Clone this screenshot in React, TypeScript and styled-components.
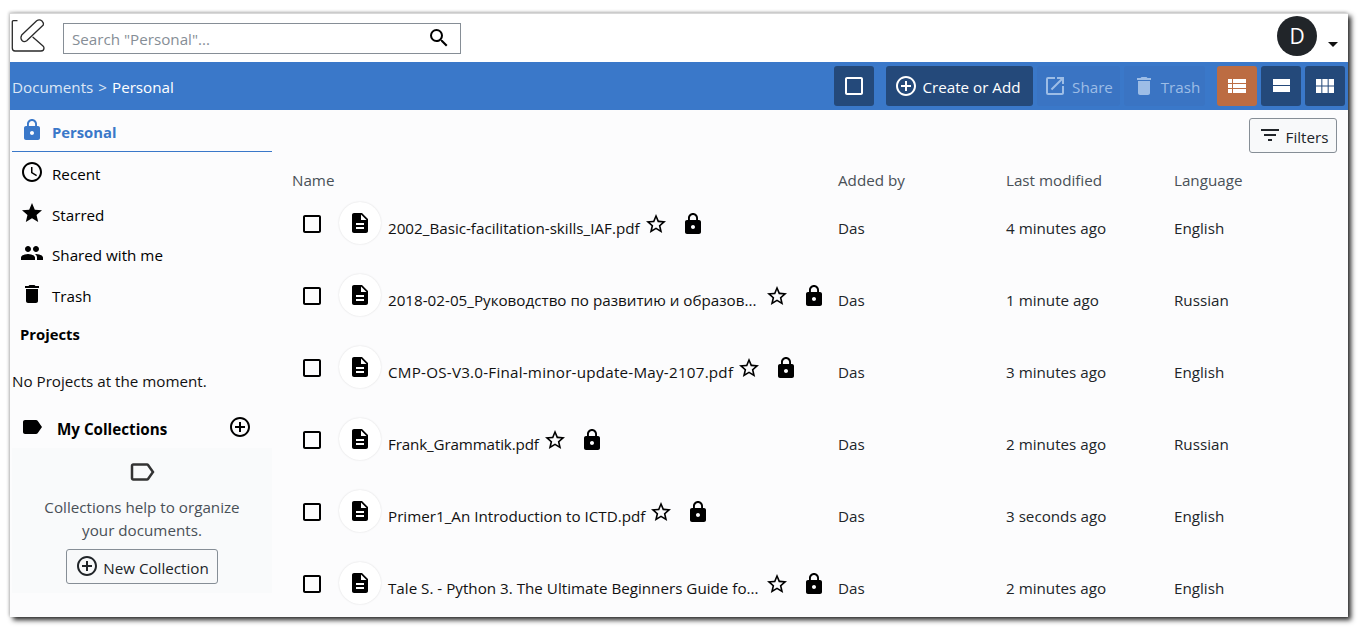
import styled, { createGlobalStyle } from "styled-components";
import {
  MdAccessTime,
  MdAddCircleOutline,
  MdCheckBoxOutlineBlank,
  MdDelete,
  MdDescription,
  MdFilterList,
  MdLabel,
  MdLabelOutline,
  MdLock,
  MdOpenInNew,
  MdPeople,
  MdSearch,
  MdStar,
  MdStarBorder,
  MdViewList,
  MdViewModule,
} from "react-icons/md";

const GlobalStyle = createGlobalStyle`
  html {
    overflow: hidden;
    background: #fff;
  }
  body {
    margin: 0;
    padding: 0;
    font-family: "Open Sans", "Noto Sans", sans-serif;
    font-size: 15.2px;
    color: #212529;
  }
`;

const Page = styled.div`
  padding: 13px 0 11px 10px;
  width: 1338px;
`;

const Window = styled.div`
  width: 1338px;
  height: 604px;
  background: #fcfcfd;
  border-top: 1px solid #d8d8d8;
  box-sizing: border-box;
  box-shadow: 3px 3px 5px rgba(0, 0, 0, 0.85), -1px -1px 3px rgba(0, 0, 0, 0.22);
  overflow: hidden;
`;

const TopBar = styled.header`
  height: 48px;
  background: #fff;
  display: flex;
  align-items: center;
  padding-left: 1px;
`;

const Logo = styled.svg`
  width: 34px;
  height: 36px;
  flex: none;
  align-self: flex-start;
  margin-top: 4px;
`;

const SearchBox = styled.div`
  width: 398px;
  height: 31px;
  margin-left: 18px;
  border: 1px solid #868e96;
  box-sizing: border-box;
  display: flex;
  align-items: center;
  justify-content: space-between;
  padding: 1px 9px 0 8px;
  color: #868e96;
  font-size: 15.2px;
  background: #fff;
  svg {
    color: #000;
    margin-top: -1px;
  }
`;

const Avatar = styled.div`
  width: 40px;
  height: 40px;
  border-radius: 50%;
  background: #212529;
  color: #fff;
  font-size: 21px;
  display: flex;
  align-items: center;
  justify-content: center;
  margin-left: auto;
  align-self: flex-start;
  margin-top: 2px;
`;

const Caret = styled.span`
  width: 0;
  height: 0;
  margin: 12px 10px 0 11px;
  border-left: 5px solid transparent;
  border-right: 5px solid transparent;
  border-top: 5px solid #111;
`;

const ActionBar = styled.div`
  height: 48px;
  background: #3a78c9;
  display: flex;
  align-items: center;
  padding: 0 3px 0 2px;
  color: #fff;
`;

const Crumbs = styled.div`
  flex: 1;
  font-size: 15.2px;
  color: #dbe6f5;
  padding-top: 2px;
  b {
    font-weight: 400;
    color: #fff;
  }
  i {
    font-style: normal;
    margin: 0 5px;
  }
`;

const BarButton = styled.div<{
  $tone?: "dark" | "faded" | "accent";
  $width: number;
  $gap?: number;
  $pad?: string;
}>`
  width: ${(p) => p.$width}px;
  height: 40px;
  margin-left: ${(p) => p.$gap ?? 4}px;
  padding: ${(p) => p.$pad ?? "0"};
  border-radius: 3px;
  box-sizing: border-box;
  display: flex;
  align-items: center;
  justify-content: center;
  gap: ${(p) => (p.$tone === "faded" ? 5 : 4)}px;
  font-size: 15.2px;
  background: ${(p) => (p.$tone === "faded" ? "#3a74c3" : p.$tone === "accent" ? "#bc6c42" : "#24497a")};
  color: ${(p) => (p.$tone === "faded" ? "#9dbde6" : "#fff")};
  span {
    position: relative;
    top: 1px;
  }
`;

const Body = styled.div`
  display: flex;
  height: 507px;
`;

const Sidebar = styled.aside`
  width: 262px;
  flex: none;
  padding-left: 2px;
  box-sizing: border-box;
`;

const ActiveNav = styled.div`
  height: 42px;
  display: flex;
  align-items: center;
  gap: 8px;
  padding-left: 8px;
  box-sizing: border-box;
  border-bottom: 1px solid #3a78c9;
  color: #3a78c9;
  font-weight: 700;
  font-size: 14.8px;
  svg {
    position: relative;
    top: -1px;
  }
  span {
    position: relative;
    top: 1px;
  }
`;

const NavItem = styled.div`
  height: 40.5px;
  display: flex;
  align-items: center;
  gap: 8px;
  padding-left: 8px;
  color: #000;
  font-size: 15.2px;
  span {
    position: relative;
    top: 2px;
  }
`;

const SectionTitle = styled.div`
  font-weight: 700;
  font-size: 14.8px;
  color: #000;
  padding: 0 0 0 8px;
  margin-top: 10px;
`;

const Muted = styled.div`
  margin-top: 27px;
  font-size: 15.2px;
  color: #111;
`;

const CollectionsHead = styled.div`
  display: flex;
  align-items: center;
  margin-top: 24px;
  padding-left: 8px;
  font-weight: 700;
  font-size: 15.2px;
  color: #000;
  span {
    margin-left: 13px;
    position: relative;
    top: 2px;
  }
  svg:last-child {
    margin-left: auto;
    margin-right: 20px;
  }
`;

const CollectionsEmpty = styled.div`
  margin-top: 9px;
  height: 145px;
  padding-top: 9px;
  box-sizing: border-box;
  background: #f9fafb;
  display: flex;
  flex-direction: column;
  align-items: center;
  color: #495057;
  font-size: 15.2px;
  line-height: 23px;
  text-align: center;
  & > svg {
    margin-bottom: 9px;
    color: #333;
  }
`;

const OutlineButton = styled.div`
  display: inline-flex;
  align-items: center;
  gap: 4px;
  height: 35px;
  border: 1px solid #868e96;
  border-radius: 3px;
  background: #f8f9fa;
  box-sizing: border-box;
  color: #212529;
  font-size: 15.2px;
  padding-top: 3px;
  svg {
    margin-top: -4px;
  }
`;

const NewCollection = styled(OutlineButton)`
  width: 152px;
  justify-content: center;
  margin-top: 7px;
`;

const Main = styled.main`
  flex: 1;
  padding-left: 20px;
  min-width: 0;
`;

const FilterRow = styled.div`
  display: flex;
  justify-content: flex-end;
  padding: 8px 11px 0 0;
`;

const FilterButton = styled(OutlineButton)`
  width: 88px;
  justify-content: center;
`;

const Row = styled.div`
  display: grid;
  grid-template-columns: 546px 168px 168px 1fr;
  align-items: center;
`;

const HeadRow = styled(Row)`
  height: 18px;
  margin-top: 17px;
  color: #495057;
  font-size: 15.2px;
`;

const DocRow = styled(Row)`
  height: 72px;
  color: #212529;
  font-size: 15.2px;
  & > span {
    position: relative;
    top: 4px;
  }
`;

const NameCell = styled.div`
  display: flex;
  align-items: center;
  padding-left: 8px;
  min-width: 0;
  color: #000;
`;

const DocIcon = styled.div`
  width: 42px;
  height: 42px;
  flex: none;
  margin: -2px 0 0 15px;
  border-radius: 50%;
  background: #fff;
  box-shadow: 0 0 2px rgba(0, 0, 0, 0.14);
  display: flex;
  align-items: center;
  justify-content: center;
`;

const FileName = styled.span<{ $track?: number; $width?: number }>`
  margin-left: 7px;
  color: #111;
  font-size: 15.2px;
  position: relative;
  top: 4px;
  white-space: nowrap;
  letter-spacing: ${(p) => p.$track ?? 0}px;
  width: ${(p) => (p.$width ? `${p.$width}px` : "auto")};
`;

const Star = styled(MdStarBorder)`
  margin-left: 4px;
  flex: none;
`;

const Lock = styled(MdLock)`
  margin-left: 13px;
  flex: none;
`;

type Doc = { name: string; when: string; lang: string; track?: number; width?: number };

const docs: Doc[] = [
  { name: "2002_Basic-facilitation-skills_IAF.pdf", when: "4 minutes ago", lang: "English" },
  { name: "2018-02-05_Руководство по развитию и образов...", when: "1 minute ago", lang: "Russian", width: 373 },
  { name: "CMP-OS-V3.0-Final-minor-update-May-2107.pdf", when: "3 minutes ago", lang: "English", track: 0.23 },
  { name: "Frank_Grammatik.pdf", when: "2 minutes ago", lang: "Russian", track: -0.15 },
  { name: "Primer1_An Introduction to ICTD.pdf", when: "3 seconds ago", lang: "English" },
  { name: "Tale S. - Python 3. The Ultimate Beginners Guide fo...", when: "2 minutes ago", lang: "English", width: 373 },
];

export default function App() {
  return (
    <Page>
      <GlobalStyle />
      <Window>
        <TopBar>
          <Logo viewBox="0 0 34 36" fill="none" stroke="#2a2a2a" strokeWidth="1.3" strokeLinejoin="round" strokeLinecap="round">
            <path d="M6 2.7H2.5Q1.3 2.7 1.3 4V30Q1.3 33 4 33H30Q33 33 33 30Q33 29 32 28L22 19.3" />
            <path d="M10.7 17L25.7 2.7Q28.5 1 31 3Q33 5 32.3 7L15.7 22.7Q13 24.5 11 22.5Q9 20 10.7 17Z" />
          </Logo>
          <SearchBox>
            Search "Personal"...
            <MdSearch size={24} />
          </SearchBox>
          <Avatar>D</Avatar>
          <Caret />
        </TopBar>
        <ActionBar>
          <Crumbs>
            Documents<i>&gt;</i>
            <b>Personal</b>
          </Crumbs>
          <BarButton $width={40}>
            <MdCheckBoxOutlineBlank size={24} />
          </BarButton>
          <BarButton $width={147} $gap={12} $pad="0 4px 0 0">
            <MdAddCircleOutline size={24} />
            <span>Create or Add</span>
          </BarButton>
          <BarButton $tone="faded" $width={83} $pad="0 1px 0 0">
            <MdOpenInNew size={24} />
            <span>Share</span>
          </BarButton>
          <BarButton $tone="faded" $width={81} $pad="0 0 0 3px">
            <MdDelete size={24} />
            <span>Trash</span>
          </BarButton>
          <BarButton $tone="accent" $width={40} $gap={12}>
            <MdViewList size={24} />
          </BarButton>
          <BarButton $width={40}>
            <svg width="24" height="24" viewBox="0 0 24 24" fill="currentColor">
              <path d="M4 18h17v-6H4v6zM4 5v6h17V5H4z" />
            </svg>
          </BarButton>
          <BarButton $width={40}>
            <MdViewModule size={24} />
          </BarButton>
        </ActionBar>
        <Body>
          <Sidebar>
            <ActiveNav>
              <MdLock size={24} />
              <span>Personal</span>
            </ActiveNav>
            <NavItem>
              <MdAccessTime size={24} />
              <span>Recent</span>
            </NavItem>
            <NavItem>
              <MdStar size={24} />
              <span>Starred</span>
            </NavItem>
            <NavItem>
              <MdPeople size={24} />
              <span>Shared with me</span>
            </NavItem>
            <NavItem>
              <MdDelete size={24} />
              <span>Trash</span>
            </NavItem>
            <SectionTitle>Projects</SectionTitle>
            <Muted>No Projects at the moment.</Muted>
            <CollectionsHead>
              <MdLabel size={24} />
              <span>My Collections</span>
              <MdAddCircleOutline size={24} />
            </CollectionsHead>
            <CollectionsEmpty>
              <MdLabelOutline size={30} />
              Collections help to organize
              <br />
              your documents.
              <NewCollection>
                <MdAddCircleOutline size={24} />
                New Collection
              </NewCollection>
            </CollectionsEmpty>
          </Sidebar>
          <Main>
            <FilterRow>
              <FilterButton>
                <MdFilterList size={24} />
                Filters
              </FilterButton>
            </FilterRow>
            <HeadRow>
              <span>Name</span>
              <span>Added by</span>
              <span>Last modified</span>
              <span>Language</span>
            </HeadRow>
            {docs.map((d) => (
              <DocRow key={d.name}>
                <NameCell>
                  <MdCheckBoxOutlineBlank size={24} />
                  <DocIcon>
                    <MdDescription size={24} />
                  </DocIcon>
                  <FileName $track={d.track} $width={d.width}>
                    {d.name}
                  </FileName>
                  <Star size={24} />
                  <Lock size={24} />
                </NameCell>
                <span>Das</span>
                <span>{d.when}</span>
                <span>{d.lang}</span>
              </DocRow>
            ))}
          </Main>
        </Body>
      </Window>
    </Page>
  );
}
